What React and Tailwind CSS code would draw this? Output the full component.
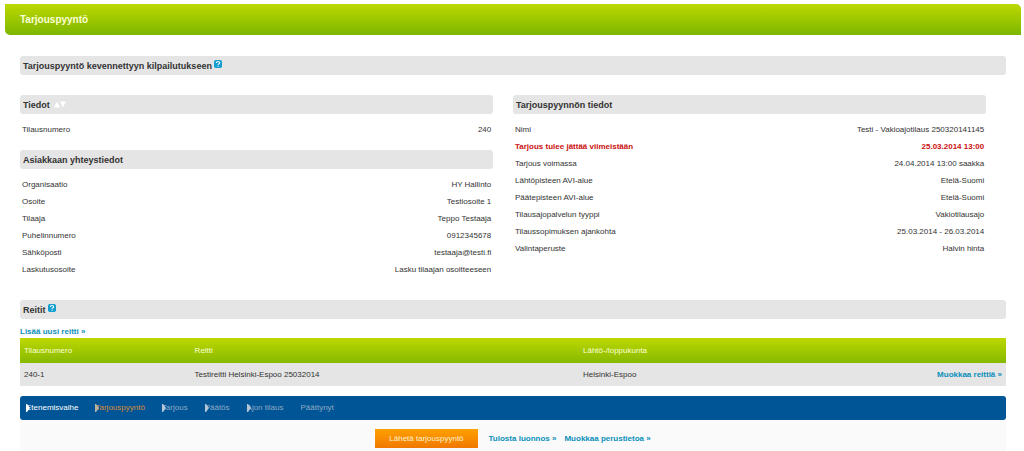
const customer = [
  ['Organisaatio', 'HY Hallinto'],
  ['Osoite', 'Testiosoite 1'],
  ['Tilaaja', 'Teppo Testaaja'],
  ['Puhelinnumero', '0912345678'],
  ['Sähköposti', 'testaaja@testi.fi'],
  ['Laskutusosoite', 'Lasku tilaajan osoitteeseen'],
];

const request = [
  ['Nimi', 'Testi - Vakioajotilaus 250320141145'],
  ['Tarjous tulee jättää viimeistään', '25.03.2014 13:00', true],
  ['Tarjous voimassa', '24.04.2014 13:00 saakka'],
  ['Lähtöpisteen AVI-alue', 'Etelä-Suomi'],
  ['Päätepisteen AVI-alue', 'Etelä-Suomi'],
  ['Tilausajopalvelun tyyppi', 'Vakiotilausajo'],
  ['Tilaussopimuksen ajankohta', '25.03.2014 - 26.03.2014'],
  ['Valintaperuste', 'Halvin hinta'],
];

const steps = [
  ['Etenemisvaihe', 'text-white', 'text-white'],
  ['Tarjouspyyntö', 'text-[#d98a35]', 'text-[#b9b3a0]'],
  ['Tarjous', 'text-[#8fa9c4]', 'text-[#b4c6d8]'],
  ['Päätös', 'text-[#8fa9c4]', 'text-[#b4c6d8]'],
  ['Ajon tilaus', 'text-[#8fa9c4]', 'text-[#b4c6d8]'],
  ['Päättynyt', 'text-[#8fa9c4]', null],
];

function HelpButton() {
  return (
    <button type="button" aria-label="Ohje" className="mb-1 ml-0.5 block size-2 cursor-pointer">
      <svg viewBox="0 0 14 14" className="block size-2">
        <rect width="14" height="14" rx="3" fill="#149fd0" />
        <path d="M4.2 5.2C4.2 1.6 10 1.8 9.8 5 9.7 6.8 7.1 6.8 7.1 8.8M7.1 10.2V12" fill="none" stroke="#fff" strokeWidth="1.8" />
      </svg>
    </button>
  );
}

function Heading({ children }) {
  return (
    <div className="flex h-[19px] items-center rounded-[3px] bg-[#e5e5e5] px-[3px] text-[9px] text-[#333]">
      {children}
    </div>
  );
}

function Details({ rows }) {
  return (
    <dl className="px-0.5 pt-[7px]">
      {rows.map(([label, value, urgent]) => (
        <div
          key={label}
          className={urgent ? 'flex h-[17px] items-center justify-between font-bold text-[#cc1010]' : 'flex h-[17px] items-center justify-between'}
        >
          <dt>{label}</dt>
          <dd>{value}</dd>
        </div>
      ))}
    </dl>
  );
}

function Link({ children }) {
  return <a href="#" className="font-bold text-[#0a8fba]">{children}</a>;
}

export default function App() {
  return (
    <div className="bg-white pt-1 pr-[3px] pl-[5px] font-['Liberation_Sans',Arial,sans-serif] text-[8px] leading-[12px] text-[#333]">
      <header className="flex h-[31px] items-center rounded-tr-[5px] rounded-bl-[5px] bg-linear-to-b from-[#bdd800] to-[#7cb600] px-[15px]">
        <h1 className="text-[10px] font-bold text-[#fbffd8]">Tarjouspyyntö</h1>
      </header>

      <main className="pt-[21px] pr-[15px] pl-[15px]">
        <Heading>
          <h2 className="font-bold">Tarjouspyyntö kevennettyyn kilpailutukseen</h2>
          <HelpButton />
        </Heading>

        <div className="flex pt-5">
          <section className="mr-[2%] w-[48%]">
            <Heading>
              <h2 className="font-bold">Tiedot</h2>
              <svg viewBox="0 0 12 7" className="ml-1 h-[7px] w-3" fill="#fff">
                <path d="M0 6.5 3 .5 6 6.5ZM6 .5H12L9 6.5Z" />
              </svg>
            </Heading>
            <Details rows={[['Tilausnumero', '240']]} />
            <div className="pt-3">
              <Heading>
                <h2 className="font-bold">Asiakkaan yhteystiedot</h2>
              </Heading>
              <Details rows={customer} />
            </div>
          </section>
          <section className="w-[48%]">
            <Heading>
              <h2 className="font-bold">Tarjouspyynnön tiedot</h2>
            </Heading>
            <Details rows={request} />
          </section>
        </div>

        <section className="pt-[22px]">
          <Heading>
            <h2 className="font-bold">Reitit</h2>
            <HelpButton />
          </Heading>
          <div className="flex h-[19px] items-end">
            <Link>Lisää uusi reitti »</Link>
          </div>
          <table className="w-full table-fixed border-collapse text-left">
            <thead>
              <tr className="h-[25px] bg-linear-to-b from-[#bdd800] to-[#86b900] text-[#fbffd8]">
                <th className="w-[17%] px-1 font-normal">Tilausnumero</th>
                <th className="w-[40%] px-[7px] font-normal">Reitti</th>
                <th className="w-[25%] px-px font-normal">Lähtö-/loppukunta</th>
                <th aria-label="Toiminnot" />
              </tr>
            </thead>
            <tbody>
              <tr className="h-[23px] bg-[#e5e5e5]">
                <td className="px-1">240-1</td>
                <td className="px-[7px]">Testireitti Helsinki-Espoo 25032014</td>
                <td className="px-px">Helsinki-Espoo</td>
                <td className="px-1 text-right"><Link>Muokkaa reittiä »</Link></td>
              </tr>
            </tbody>
          </table>
        </section>

        <ol className="mt-2.5 flex h-6 items-center gap-[17px] rounded-[3px] bg-[#005596] px-1.5">
          {steps.map(([label, color, arrow]) => (
            <li key={label} className="relative">
              <span className={color}>{label}</span>
              {arrow && (
                <svg viewBox="0 0 4 8" className={'absolute top-0.5 left-0 h-2 w-1 ' + arrow} fill="currentColor">
                  <path d="M0 0H1L4 4 1 8H0Z" />
                </svg>
              )}
            </li>
          ))}
        </ol>

        <div className="flex h-[31px] items-end justify-center bg-[#fafafa] pb-[3px]">
          <button type="button" className="h-[19px] cursor-pointer bg-linear-to-b from-[#ffa000] to-[#f07800] px-[14px] text-[#fff3d0]">
            Lähetä tarjouspyyntö
          </button>
          <div className="flex h-[19px] items-center gap-2 pl-[11px]">
            <Link>Tulosta luonnos »</Link>
            <Link>Muokkaa perustietoa »</Link>
          </div>
        </div>
      </main>
    </div>
  );
}
